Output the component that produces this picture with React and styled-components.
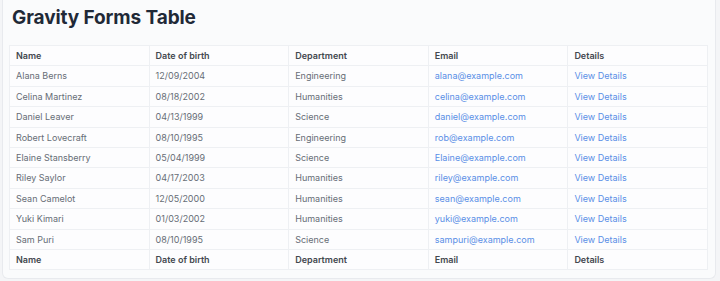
import React from 'react';
import styled, { createGlobalStyle } from 'styled-components';

const GlobalStyle = createGlobalStyle`
  html, body {
    margin: 0;
    padding: 0;
    background: #f4f5f7;
  }
  body {
    font-family: Inter, 'Liberation Sans', sans-serif;
  }
`;

const Page = styled.div`
  padding: 0 4px 3px 2px;
`;

const Card = styled.div`
  background: #fafbfc;
  border: 1px solid #e8eaee;
  border-top: none;
  border-radius: 0 0 6px 6px;
  padding: 6px 7px 8px 6px;
`;

const Title = styled.h1`
  margin: 0 0 15px 3px;
  font-size: 19px;
  line-height: 24px;
  font-weight: 700;
  color: #1f2937;
  letter-spacing: -0.1px;
`;

const Table = styled.table`
  width: 100%;
  table-layout: fixed;
  border-collapse: collapse;
  background: #fdfdfe;
  border: 1px solid #eceef2;
  font-size: 9px;
`;

const Cell = styled.td`
  padding: 4px 6px;
  line-height: 11.4px;
  border: 1px solid #eef0f3;
  color: ${({ $link }) => ($link ? '#5a8fe6' : '#676d76')};
  white-space: nowrap;
  overflow: hidden;
`;

const HeadCell = styled.th`
  padding: 4px 6px;
  line-height: 11.4px;
  border: 1px solid #eef0f3;
  text-align: left;
  font-weight: 600;
  color: #43484f;
`;

const columns = ['Name', 'Date of birth', 'Department', 'Email', 'Details'];

const people = [
  ['Alana Berns', '12/09/2004', 'Engineering', 'alana@example.com'],
  ['Celina Martinez', '08/18/2002', 'Humanities', 'celina@example.com'],
  ['Daniel Leaver', '04/13/1999', 'Science', 'daniel@example.com'],
  ['Robert Lovecraft', '08/10/1995', 'Engineering', 'rob@example.com'],
  ['Elaine Stansberry', '05/04/1999', 'Science', 'Elaine@example.com'],
  ['Riley Saylor', '04/17/2003', 'Humanities', 'riley@example.com'],
  ['Sean Camelot', '12/05/2000', 'Humanities', 'sean@example.com'],
  ['Yuki Kimari', '01/03/2002', 'Humanities', 'yuki@example.com'],
  ['Sam Puri', '08/10/1995', 'Science', 'sampuri@example.com'],
];

function HeaderRow() {
  return (
    <tr>
      {columns.map((c) => (
        <HeadCell key={c}>{c}</HeadCell>
      ))}
    </tr>
  );
}

export default function App() {
  return (
    <Page>
      <GlobalStyle />
      <Card>
        <Title>Gravity Forms Table</Title>
        <Table>
          <thead>
            <HeaderRow />
          </thead>
          <tbody>
            {people.map(([name, dob, dept, email]) => (
              <tr key={email}>
                <Cell>{name}</Cell>
                <Cell>{dob}</Cell>
                <Cell>{dept}</Cell>
                <Cell $link>{email}</Cell>
                <Cell $link>View Details</Cell>
              </tr>
            ))}
          </tbody>
          <tfoot>
            <HeaderRow />
          </tfoot>
        </Table>
      </Card>
    </Page>
  );
}
